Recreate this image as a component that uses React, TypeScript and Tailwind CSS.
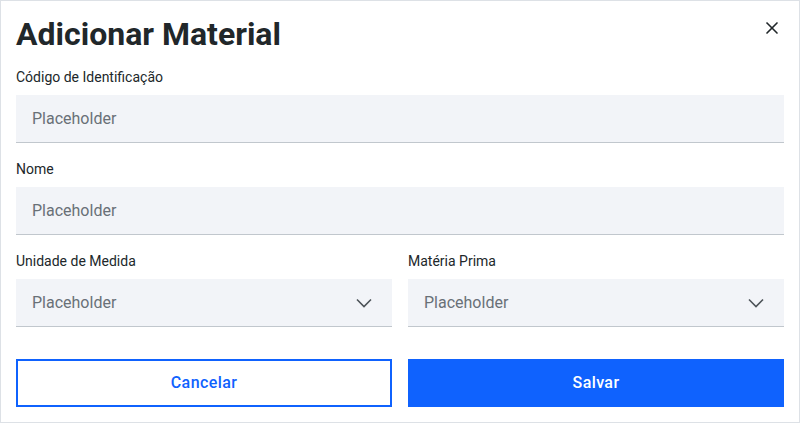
import React from 'react';
import { X } from 'lucide-react';

function Chevron() {
  return (
    <svg width="16" height="10" viewBox="0 0 16 10" className="shrink-0">
      <polyline points="1,1.5 8,8.5 15,1.5" fill="none" stroke="#4d5358" strokeWidth="1.6" />
    </svg>
  );
}

function Field({ label, select }: { label: string; select?: boolean }) {
  return (
    <div className="flex flex-col min-w-0">
      <label className="text-sm leading-5 text-[#21272a] mb-2">{label}</label>
      <div className="h-12 bg-[#f2f4f8] border-b border-[#c1c7cd] flex items-center justify-between pl-4 pr-5">
        <span className="text-base text-[#697077]">Placeholder</span>
        {select && <Chevron />}
      </div>
    </div>
  );
}

export default function App() {
  return (
    <div
      className="w-[800px] h-[423px] bg-white border border-[#dde1e6] px-[15px] pt-[15px] flex flex-col"
      style={{ fontFamily: 'Roboto, "Liberation Sans", sans-serif' }}
    >
      {/* Header */}
      <div className="flex items-start justify-between">
        <h1 className="text-[32px] leading-9 font-bold text-[#21272a]">Adicionar Material</h1>
        <button className="mt-[2px] mr-[2px] text-[#21272a]">
          <X size={20} strokeWidth={2} />
        </button>
      </div>

      <div className="mt-[15px] flex flex-col gap-4">
        <Field label="Código de Identificação" />
        <Field label="Nome" />
        <div className="grid grid-cols-2 gap-4">
          <Field label="Unidade de Medida" select />
          <Field label="Matéria Prima" select />
        </div>
      </div>

      <div className="mt-8 grid grid-cols-2 gap-4">
        <button className="h-12 border-2 border-[#0f62fe] text-[#0f62fe] text-base font-medium tracking-[0.4px]">
          Cancelar
        </button>
        <button className="h-12 bg-[#0f62fe] text-white text-base font-medium tracking-[0.4px]">
          Salvar
        </button>
      </div>
    </div>
  );
}
